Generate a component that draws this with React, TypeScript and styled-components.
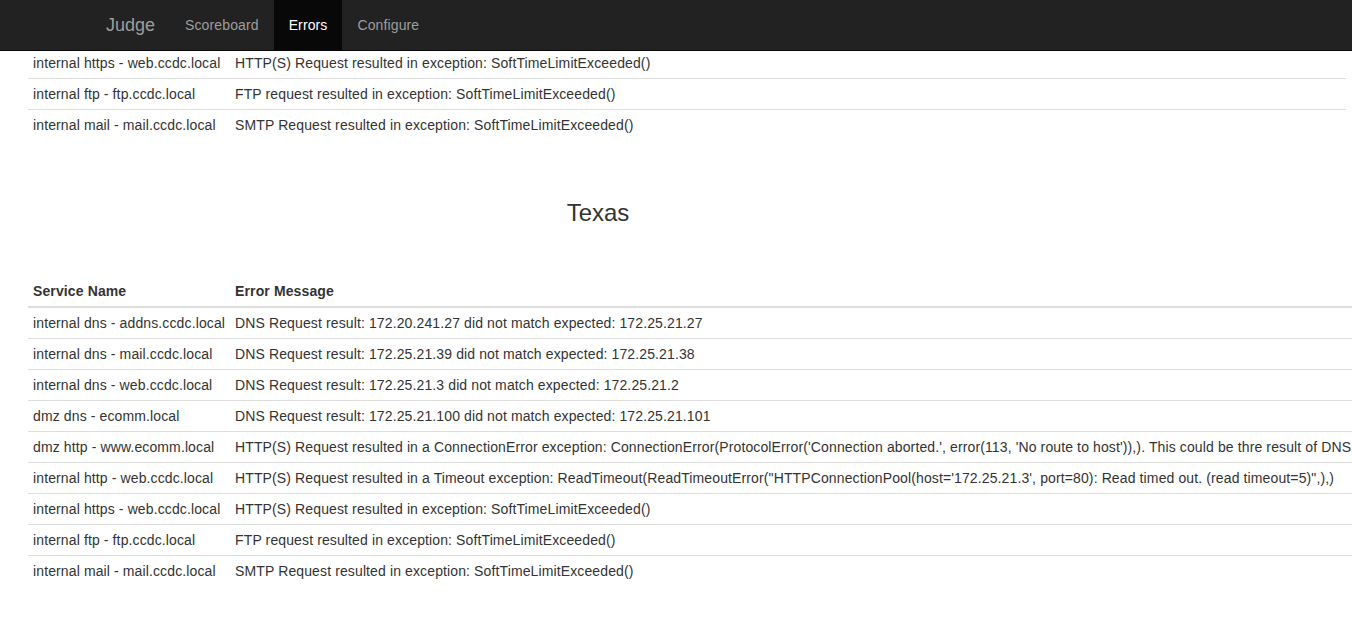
import React from "react";
import styled, { createGlobalStyle } from "styled-components";

const GlobalStyle = createGlobalStyle`
  *, *::before, *::after { box-sizing: border-box; }
  html, body {
    margin: 0;
    padding: 0;
    overflow: hidden;
    background: #fff;
  }
  body {
    font-family: "Liberation Sans", Arial, Helvetica, sans-serif;
    font-size: 14px;
    line-height: 1.42857143;
    letter-spacing: 0.12px;
    color: #333;
  }
`;

const Navbar = styled.nav`
  position: fixed;
  top: 0;
  left: 0;
  right: 0;
  z-index: 1030;
  height: 51px;
  background: #222;
  border-bottom: 1px solid #080808;
`;

const NavContainer = styled.div`
  width: 1170px;
  margin: 0 auto;
  padding: 0 15px;
  display: flex;
  align-items: stretch;
  height: 50px;
`;

const Brand = styled.a`
  margin-left: -15px;
  padding: 15px;
  height: 50px;
  font-size: 18px;
  line-height: 20px;
  letter-spacing: 0;
  color: #9d9d9d;
  text-decoration: none;
`;

const NavList = styled.ul`
  display: flex;
  list-style: none;
  margin: 0;
  padding: 0;
`;

const NavLink = styled.a<{ $active?: boolean }>`
  display: block;
  padding: 15px;
  line-height: 20px;
  height: 50px;
  text-decoration: none;
  color: ${(p) => (p.$active ? "#fff" : "#9d9d9d")};
  background: ${(p) => (p.$active ? "#080808" : "transparent")};
`;

const Page = styled.main`
  padding: 47px 0 0 28px;
`;

const Section = styled.section`
  display: flex;
  flex-direction: column;
  align-items: flex-start;
`;

const Title = styled.h3`
  width: 1140px;
  margin: 40px 0 50px;
  font-size: 24px;
  line-height: 26px;
  font-weight: 500;
  letter-spacing: 0;
  text-align: center;
  color: #333;
`;

const Table = styled.table<{ $width?: string }>`
  width: ${(p) => p.$width ?? "auto"};
  border-collapse: collapse;
  border-spacing: 0;
  margin-bottom: 20px;
  white-space: nowrap;
`;

const HeadCell = styled.th<{ $first?: boolean }>`
  text-align: left;
  vertical-align: bottom;
  padding: 5px;
  line-height: 20px;
  font-weight: bold;
  border-top: 0;
  border-bottom: 2px solid #ddd;
  min-width: ${(p) => (p.$first ? "202px" : "0")};
  width: ${(p) => (p.$first ? "202px" : "auto")};
`;

const Cell = styled.td<{ $first?: boolean }>`
  padding: 5px;
  line-height: 20px;
  vertical-align: top;
  border-top: 1px solid #ddd;
  min-width: ${(p) => (p.$first ? "202px" : "0")};
  width: ${(p) => (p.$first ? "202px" : "auto")};
`;

type Row = [string, string];

const tailRows: Row[] = [
  ["internal https - web.ccdc.local", "HTTP(S) Request resulted in exception: SoftTimeLimitExceeded()"],
  ["internal ftp - ftp.ccdc.local", "FTP request resulted in exception: SoftTimeLimitExceeded()"],
  ["internal mail - mail.ccdc.local", "SMTP Request resulted in exception: SoftTimeLimitExceeded()"],
];

const texasRows: Row[] = [
  ["internal dns - addns.ccdc.local", "DNS Request result: 172.20.241.27 did not match expected: 172.25.21.27"],
  ["internal dns - mail.ccdc.local", "DNS Request result: 172.25.21.39 did not match expected: 172.25.21.38"],
  ["internal dns - web.ccdc.local", "DNS Request result: 172.25.21.3 did not match expected: 172.25.21.2"],
  ["dmz dns - ecomm.local", "DNS Request result: 172.25.21.100 did not match expected: 172.25.21.101"],
  [
    "dmz http - www.ecomm.local",
    "HTTP(S) Request resulted in a ConnectionError exception: ConnectionError(ProtocolError('Connection aborted.', error(113, 'No route to host')),). This could be thre result of DNS resolution failing or the host being unreachable.",
  ],
  [
    "internal http - web.ccdc.local",
    "HTTP(S) Request resulted in a Timeout exception: ReadTimeout(ReadTimeoutError(\"HTTPConnectionPool(host='172.25.21.3', port=80): Read timed out. (read timeout=5)\",),)",
  ],
  ...tailRows,
];

const ErrorTable: React.FC<{ rows: Row[]; showHead?: boolean; width?: string }> = ({
  rows,
  showHead,
  width,
}) => (
  <Table $width={width}>
    {showHead && (
      <thead>
        <tr>
          <HeadCell $first>Service Name</HeadCell>
          <HeadCell>Error Message</HeadCell>
        </tr>
      </thead>
    )}
    <tbody>
      {rows.map(([name, msg]) => (
        <tr key={name}>
          <Cell $first>{name}</Cell>
          <Cell>{msg}</Cell>
        </tr>
      ))}
    </tbody>
  </Table>
);

export default function App() {
  return (
    <>
      <GlobalStyle />
      <Navbar>
        <NavContainer>
          <Brand href="#">Judge</Brand>
          <NavList>
            <li>
              <NavLink href="#">Scoreboard</NavLink>
            </li>
            <li>
              <NavLink href="#" $active>
                Errors
              </NavLink>
            </li>
            <li>
              <NavLink href="#">Configure</NavLink>
            </li>
          </NavList>
        </NavContainer>
      </Navbar>
      <Page>
        <Section>
          <ErrorTable rows={tailRows} width="1318px" />
        </Section>
        <Section>
          <Title>Texas</Title>
          <ErrorTable rows={texasRows} showHead />
        </Section>
      </Page>
    </>
  );
}
